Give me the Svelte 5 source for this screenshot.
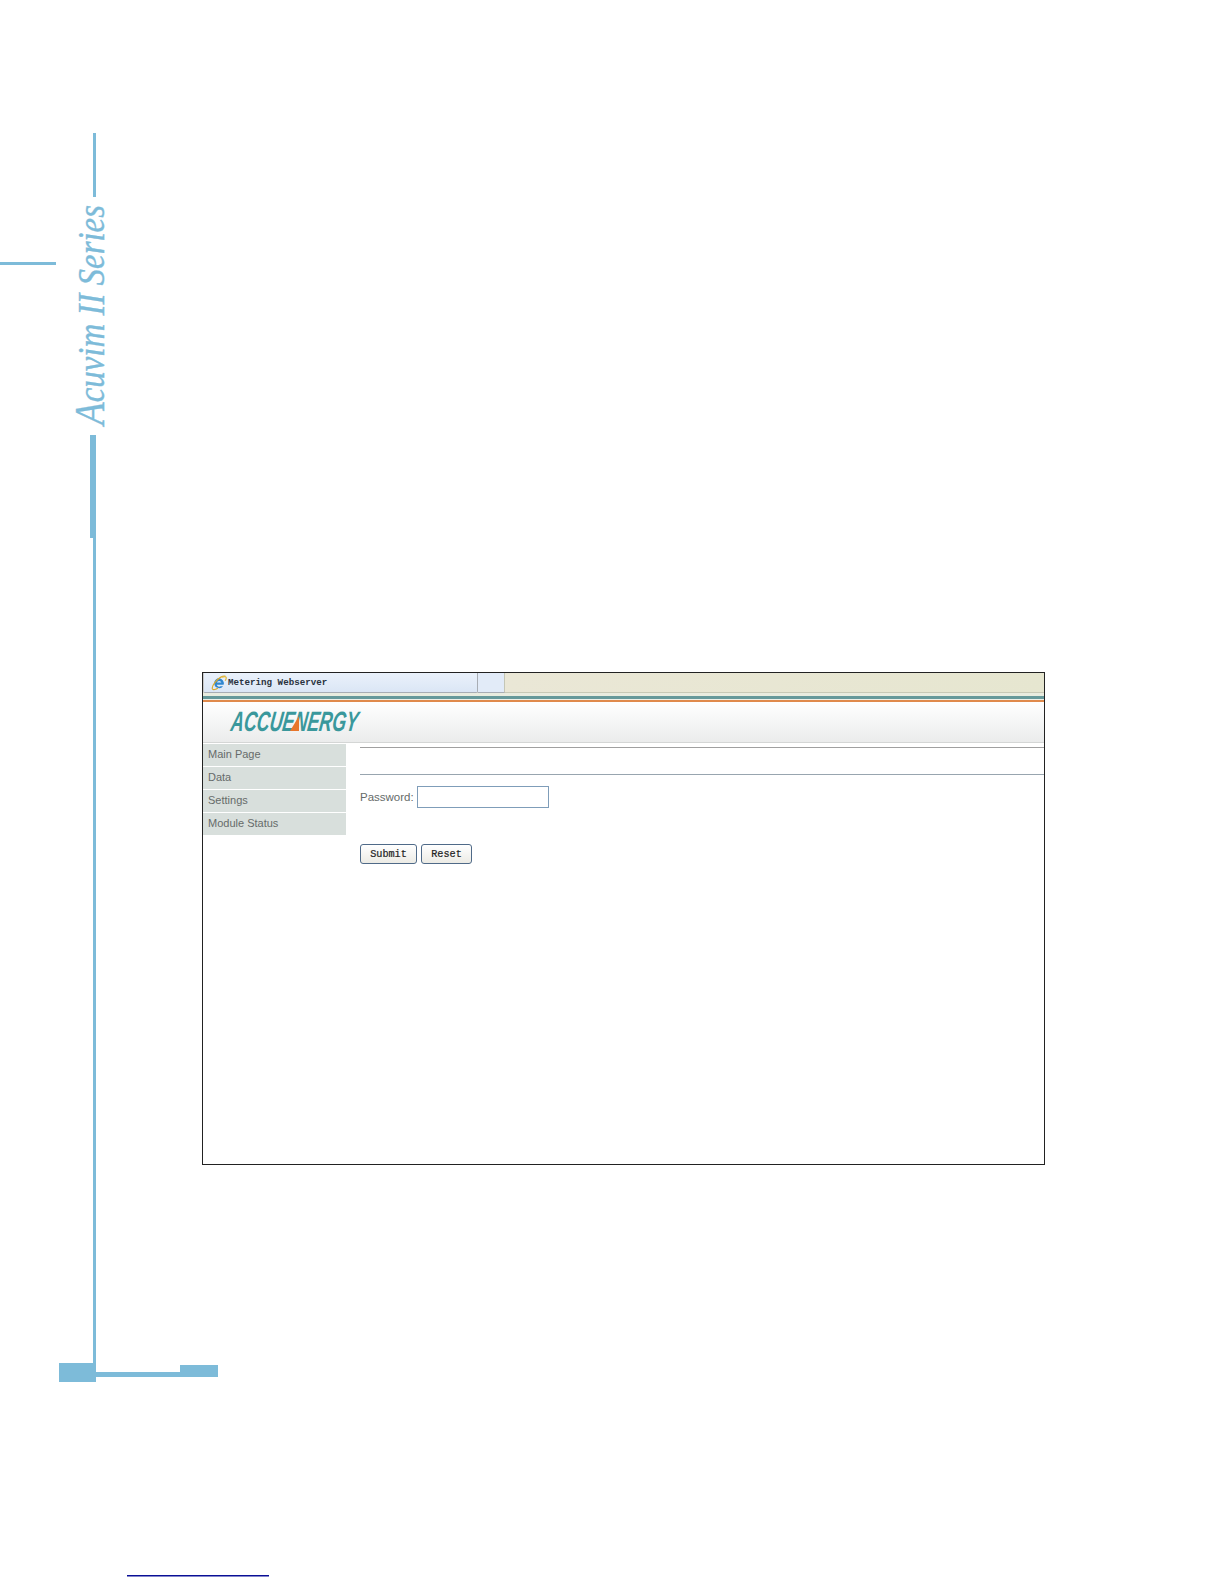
<script>
    const menu = ['Main Page', 'Data', 'Settings', 'Module Status'];
    let password = $state('');
</script>

<main class="page">
    <!-- page margin decoration of the manual -->
    <svg class="margin" width="280" height="1584" viewBox="0 0 280 1584">
        <g fill="#7dbbd9">
            <rect x="93" y="133" width="3" height="64" />
            <rect x="0" y="262" width="56" height="3" />
            <rect x="90" y="435" width="6" height="103" />
            <rect x="93" y="538" width="3" height="825" />
            <rect x="59" y="1363" width="37" height="19" />
            <rect x="96" y="1372" width="84" height="5" />
            <rect x="180" y="1365" width="38" height="12" />
        </g>
        <text class="series" transform="translate(104 425) rotate(-90)" textLength="220" lengthAdjust="spacingAndGlyphs"><tspan class="cap">A</tspan>cuvim II Series</text>
        <rect x="127" y="1575" width="142" height="1.5" fill="#0a0f96" />
    </svg>

    <div class="frame">
        <div class="tabs">
            <div class="tab">
                <svg class="ie" width="16" height="16" viewBox="0 0 16 16">
                    <path d="M8.2 3.2a5 5 0 0 0-5 5 5 5 0 0 0 8.900 3h-2.400a2.600 2.600 0 0 1-4-1.500h6.900a5 5 0 0 0-4.400-6.500zM5.800 7.600a2.400 2.400 0 0 1 4.600 0z" fill="#2f86cf" />
                    <path d="M14.500 1.200c-2.600-.9-7.200 2-10.500 6.200C2 10 .7 12.600 1.500 14c.8 1.300 3.500.4 5.500-1" fill="none" stroke="#d9a92c" stroke-width="1.200" />
                    <path d="M11 2.300c2-.9 3.400-1 4-.2.5.7.1 2.200-.8 3.700" fill="none" stroke="#e3b93c" stroke-width="1.200" />
                </svg>
                <span class="title">Metering Webserver</span>
            </div>
            <div class="newtab"></div>
            <div class="tabrest"></div>
        </div>
        <div class="stripes"></div>
        <header class="banner">
            <svg class="logo" width="200" height="32" viewBox="0 0 200 32">
                <text x="1" y="24" textLength="127" lengthAdjust="spacingAndGlyphs">ACCUENERGY</text>
                <polygon points="61,24 70,24 68,9" fill="#e8762c" />
            </svg>
        </header>
        <div class="body">
            <nav class="menu">
                {#each menu as item}
                    <div class="item">{item}</div>
                {/each}
            </nav>
            <section class="content">
                <div class="rule"></div>
                <div class="rule second"></div>
                <div class="pass">
                    <label for="pw">Password:</label>
                    <input id="pw" type="text" bind:value={password}>
                </div>
                <div class="buttons">
                    <button class="submit" type="button">Submit</button>
                    <button class="reset" type="button">Reset</button>
                </div>
            </section>
        </div>
    </div>
</main>

<style>
    :global(body) {
        margin: 0;
        background: #fff;
    }

    .page {
        position: relative;
        height: 1584px;
        padding: 672px 0 0 202px;
        box-sizing: border-box;
        overflow: hidden;
    }

    .margin {
        position: absolute;
        left: 0;
        top: 0;
    }

    .series {
        font-family: "Liberation Serif", serif;
        font-style: italic;
        font-size: 38px;
        fill: #7dbbd9;
        stroke: #7dbbd9;
        stroke-width: 0.4px;
    }

    .cap {
        font-size: 43px;
    }

    .frame {
        width: 843px;
        height: 493px;
        border: 1px solid #222;
        box-sizing: border-box;
        background: #fff;
    }

    .tabs {
        display: flex;
        height: 20px;
        background: #e4e3cd;
    }

    .tab {
        display: flex;
        align-items: center;
        gap: 1px;
        width: 275px;
        padding-left: 7px;
        box-sizing: border-box;
        background: linear-gradient(#eaf1fb, #dbe6f5);
        border-left: 1px solid #c8c8c8;
        border-right: 1px solid #a8adb4;
        border-bottom: 1px solid #a8adb4;
        border-bottom-left-radius: 2px;
        border-bottom-right-radius: 2px;
    }

    .title {
        font-family: "Liberation Mono", monospace;
        font-weight: bold;
        font-size: 9.2px;
        color: #2a3340;
    }

    .newtab {
        width: 27px;
        background: #e2ebf8;
        border-right: 1px solid #c4c6b6;
        border-bottom: 1px solid #a8adb4;
        box-sizing: border-box;
    }

    .tabrest {
        flex: 1;
        background: linear-gradient(90deg, #eae7d6, #e6e6d0);
        border-bottom: 1px solid #c8c9b6;
    }

    .stripes {
        height: 9px;
        background: linear-gradient(
            #e9ecdf 0 3px,
            #66999a 3px 6px,
            #eef0e8 6px 7px,
            #e08a4c 7px 9px
        );
    }

    .banner {
        display: flex;
        align-items: flex-start;
        height: 41px;
        padding: 5px 0 0 26px;
        box-sizing: border-box;
        background: linear-gradient(#fff, #ebecec);
        border-bottom: 1px solid #d4d6d5;
    }

    .logo text {
        font-family: "Liberation Sans", sans-serif;
        font-style: italic;
        font-weight: bold;
        font-size: 28px;
        fill: #3a989c;
    }

    .logo {
        transform: skewX(-8deg);
        transform-origin: 0 24px;
    }

    .body {
        display: flex;
    }

    .menu {
        display: flex;
        flex-direction: column;
        gap: 1px;
        width: 143px;
        margin-top: 1px;
    }

    .item {
        height: 22px;
        line-height: 21px;
        padding-left: 5px;
        background: #d8dfdc;
        font-family: "Liberation Sans", sans-serif;
        font-size: 11px;
        color: #666b6a;
    }

    .content {
        flex: 1;
        margin-left: 14px;
        font-family: "Liberation Sans", sans-serif;
    }

    .rule {
        height: 1px;
        margin-top: 4px;
        background: #a0a0a0;
    }

    .rule.second {
        margin-top: 26px;
        background: #98a5af;
    }

    .pass {
        display: flex;
        align-items: center;
        gap: 3px;
        margin-top: 11px;
    }

    label {
        font-size: 11.5px;
        color: #666b6a;
    }

    input {
        width: 132px;
        height: 22px;
        box-sizing: border-box;
        border: 1px solid #7f9db9;
        padding: 0;
        background: #fff;
    }

    .buttons {
        display: flex;
        gap: 4px;
        margin-top: 36px;
    }

    button {
        height: 20px;
        padding: 0;
        border: 1px solid #4f6a88;
        border-radius: 3px;
        background: linear-gradient(#fff, #ecebe5);
        font-family: "Liberation Mono", monospace;
        font-size: 10.2px;
        color: #222;
        -webkit-text-stroke: 0.2px #222;
    }

    .submit {
        width: 57px;
    }

    .reset {
        width: 51px;
    }
</style>
